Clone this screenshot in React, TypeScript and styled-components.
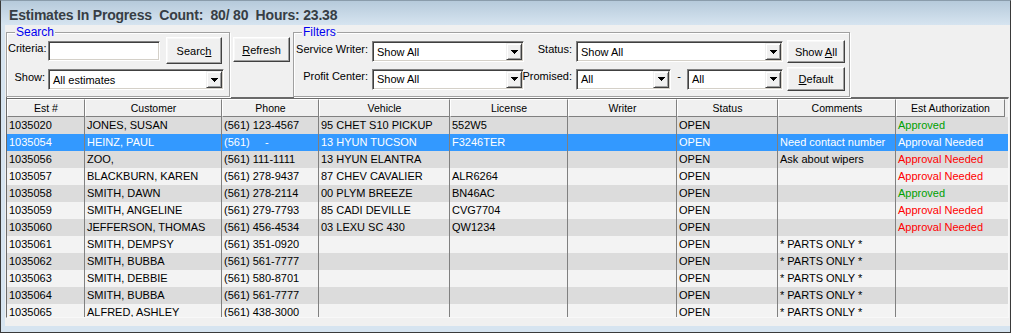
import React from "react";
import styled, { createGlobalStyle } from "styled-components";

const GlobalStyle = createGlobalStyle`
  html, body {
    margin: 0;
    padding: 0;
    background: #ffffff;
  }
  body {
    font-family: "Liberation Sans", Arial, sans-serif;
    font-size: 11px;
  }
  * {
    box-sizing: border-box;
  }
`;

const Window = styled.div`
  width: 1011px;
  height: 333px;
  display: flex;
  flex-direction: column;
  border: 1px solid #3a3a3a;
  border-top-color: #8a9cab;
  background: linear-gradient(#b6cadb 0px, #d6e4f0 24px, #d6e4f0 100%);
  overflow: hidden;
`;

const TitleBar = styled.div`
  height: 24px;
  flex: none;
  padding: 4px 0 0 8px;
  font-size: 14px;
  font-weight: bold;
  line-height: 20px;
  letter-spacing: -0.2px;
  color: #373e45;
  white-space: pre;
`;

const Panel = styled.div`
  height: 301px;
  flex: none;
  margin: 0 0 6px 4px;
  background: #f0f0f0;
  display: flex;
  flex-direction: column;
`;

const Controls = styled.div`
  height: 72px;
  flex: none;
  display: flex;
  align-items: flex-start;
  padding-left: 1px;
`;

const Group = styled.div<{ $width: number }>`
  position: relative;
  width: ${(p) => p.$width}px;
  height: 65px;
  margin-top: 7px;
  border: 1px solid #a0a0a0;
  box-shadow: inset 1px 1px 0 #ffffff, 1px 1px 0 #ffffff;
`;

const Legend = styled.span`
  position: absolute;
  top: -8px;
  left: 8px;
  padding: 0 1px;
  background: #f0f0f0;
  color: #0000f0;
  font-size: 12px;
  line-height: 14px;
`;

const SearchBody = styled.div`
  display: flex;
  flex-direction: column;
  gap: 5px;
  padding: 4px 0 0 1px;
`;

const Row = styled.div`
  display: flex;
  align-items: center;
`;

const Label = styled.span<{ $width?: number }>`
  width: ${(p) => (p.$width ? `${p.$width}px` : "auto")};
  flex: none;
  margin: 0 3px 5px 0;
  text-align: right;
  line-height: 13px;
  white-space: nowrap;
  color: #000;
`;

const FiltersBody = styled.div`
  display: grid;
  grid-template-columns: 70px 152px 44px 207px 58px;
  grid-template-rows: 23px 24px;
  column-gap: 4px;
  row-gap: 4px;
  padding: 7px 4px 0 4px;
  align-items: center;

  ${Label} {
    margin-right: 0;
    justify-self: end;
  }
`;

const Field = styled.div<{ $width?: number; $height?: number }>`
  width: ${(p) => (p.$width ? `${p.$width}px` : "100%")};
  height: ${(p) => p.$height ?? 21}px;
  flex: none;
  display: flex;
  align-items: stretch;
  padding: 1px;
  background: #ffffff;
  border: 1px solid;
  border-color: #808080 #ffffff #ffffff #808080;
  box-shadow: inset 1px 1px 0 #404040, inset -1px -1px 0 #d4d0c8;
`;

const FieldValue = styled.span`
  flex: 1;
  padding-left: 3px;
  display: flex;
  align-items: center;
  white-space: nowrap;
  overflow: hidden;
  color: #000;
`;

const ArrowButton = styled.span`
  width: 16px;
  flex: none;
  display: flex;
  align-items: center;
  justify-content: center;
  background: #f0f0f0;
  border: 1px solid;
  border-color: #f0f0f0 #404040 #404040 #f0f0f0;
  box-shadow: inset 1px 1px 0 #ffffff, inset -1px -1px 0 #a0a0a0;
`;

const Button = styled.div<{ $width: number; $height?: number }>`
  width: ${(p) => p.$width}px;
  height: ${(p) => (p.$height ? `${p.$height}px` : "100%")};
  flex: none;
  display: flex;
  align-items: center;
  justify-content: center;
  background: #f0f0f0;
  border: 1px solid;
  border-color: #ffffff #404040 #404040 #ffffff;
  box-shadow: inset -1px -1px 0 #a0a0a0, inset 1px 1px 0 #f8f8f8;
  color: #000;
  font-size: 11px;
  cursor: default;
  user-select: none;
  white-space: pre;

  u {
    text-underline-offset: 1px;
  }
`;

const RefreshButton = styled(Button)`
  margin: 12px 3px 0 3px;
`;

const SearchButton = styled(Button)`
  margin-left: 6px;
`;

const RangeCell = styled.div`
  display: flex;
  align-items: center;
`;

const Dash = styled.span`
  flex: 1;
  text-align: center;
  margin-bottom: 5px;
  line-height: 13px;
`;

const GridBox = styled.div`
  width: 1003px;
  height: 221px;
  flex: none;
  margin-left: 1px;
  border-style: solid;
  border-width: 2px 1px 1px 1px;
  border-color: #6a6a6a #f8f8f8 #f8f8f8 #6a6a6a;
  background: #f0f0f0;
  overflow: hidden;
`;

const HeaderRow = styled.div`
  display: flex;
  height: 18px;
`;

const HeadCell = styled.div<{ $width: number }>`
  width: ${(p) => p.$width}px;
  flex: none;
  background: #f0f0f0;
  border: 1px solid;
  border-color: #ffffff #808080 #808080 #ffffff;
  text-align: center;
  line-height: 16px;
  font-size: 10.5px;
  color: #000;
  white-space: nowrap;
  overflow: hidden;
`;

const HeadFiller = styled.div`
  flex: 1;
  background: #f0f0f0;
`;

const GridBody = styled.div`
  height: 200px;
  overflow: hidden;
`;

type Tone = "dark" | "light" | "selected";

const rowBg: Record<Tone, string> = {
  dark: "#dcdcdc",
  light: "#f3f3f3",
  selected: "#3399ff",
};

const DataRow = styled.div<{ $tone: Tone }>`
  display: flex;
  height: 17px;
  background: ${(p) => rowBg[p.$tone]};
  color: ${(p) => (p.$tone === "selected" ? "#ffffff" : "#000000")};
`;

const Cell = styled.div<{ $width?: number; $color?: string }>`
  width: ${(p) => (p.$width ? `${p.$width}px` : "auto")};
  flex: ${(p) => (p.$width ? "none" : "1")};
  border-right: ${(p) => (p.$width ? "1px solid #808080" : "none")};
  padding-left: 2px;
  line-height: 17px;
  font-size: 11px;
  white-space: pre;
  overflow: hidden;
  color: ${(p) => p.$color ?? "inherit"};
`;

function DownArrow() {
  return (
    <svg width="7" height="4" viewBox="0 0 7 4" shapeRendering="crispEdges">
      <polygon points="0,0 7,0 3.5,4" fill="#000" />
    </svg>
  );
}

function Select({ value, width }: { value: string; width?: number }) {
  return (
    <Field $width={width}>
      <FieldValue>{value}</FieldValue>
      <ArrowButton>
        <DownArrow />
      </ArrowButton>
    </Field>
  );
}

const columns = [
  { title: "Est #", width: 78 },
  { title: "Customer", width: 137 },
  { title: "Phone", width: 97 },
  { title: "Vehicle", width: 131 },
  { title: "License", width: 118 },
  { title: "Writer", width: 109 },
  { title: "Status", width: 101 },
  { title: "Comments", width: 118 },
];

type Auth = "" | "Approved" | "Approval Needed";

interface Estimate {
  est: string;
  customer: string;
  phone: string;
  vehicle: string;
  license: string;
  writer: string;
  status: string;
  comments: string;
  auth: Auth;
}

const estimates: Estimate[] = [
  { est: "1035020", customer: "JONES, SUSAN", phone: "(561) 123-4567", vehicle: "95 CHET S10 PICKUP", license: "552W5", writer: "", status: "OPEN", comments: "", auth: "Approved" },
  { est: "1035054", customer: "HEINZ, PAUL", phone: "(561)     -", vehicle: "13 HYUN TUCSON", license: "F3246TER", writer: "", status: "OPEN", comments: "Need contact number", auth: "Approval Needed" },
  { est: "1035056", customer: "ZOO,", phone: "(561) 111-1111", vehicle: "13 HYUN ELANTRA", license: "", writer: "", status: "OPEN", comments: "Ask about wipers", auth: "Approval Needed" },
  { est: "1035057", customer: "BLACKBURN, KAREN", phone: "(561) 278-9437", vehicle: "87 CHEV CAVALIER", license: "ALR6264", writer: "", status: "OPEN", comments: "", auth: "Approval Needed" },
  { est: "1035058", customer: "SMITH, DAWN", phone: "(561) 278-2114", vehicle: "00 PLYM BREEZE", license: "BN46AC", writer: "", status: "OPEN", comments: "", auth: "Approved" },
  { est: "1035059", customer: "SMITH, ANGELINE", phone: "(561) 279-7793", vehicle: "85 CADI DEVILLE", license: "CVG7704", writer: "", status: "OPEN", comments: "", auth: "Approval Needed" },
  { est: "1035060", customer: "JEFFERSON, THOMAS", phone: "(561) 456-4534", vehicle: "03 LEXU SC 430", license: "QW1234", writer: "", status: "OPEN", comments: "", auth: "Approval Needed" },
  { est: "1035061", customer: "SMITH, DEMPSY", phone: "(561) 351-0920", vehicle: "", license: "", writer: "", status: "OPEN", comments: "* PARTS ONLY *", auth: "" },
  { est: "1035062", customer: "SMITH, BUBBA", phone: "(561) 561-7777", vehicle: "", license: "", writer: "", status: "OPEN", comments: "* PARTS ONLY *", auth: "" },
  { est: "1035063", customer: "SMITH, DEBBIE", phone: "(561) 580-8701", vehicle: "", license: "", writer: "", status: "OPEN", comments: "* PARTS ONLY *", auth: "" },
  { est: "1035064", customer: "SMITH, BUBBA", phone: "(561) 561-7777", vehicle: "", license: "", writer: "", status: "OPEN", comments: "* PARTS ONLY *", auth: "" },
  { est: "1035065", customer: "ALFRED, ASHLEY", phone: "(561) 438-3000", vehicle: "", license: "", writer: "", status: "OPEN", comments: "* PARTS ONLY *", auth: "" },
];

const SELECTED = 1;

function authColor(auth: Auth, selected: boolean) {
  if (selected) return "#ffffff";
  if (auth === "Approved") return "#00a000";
  return "#ff0000";
}

export default function App() {
  return (
    <>
      <GlobalStyle />
      <Window>
        <TitleBar>{"Estimates In Progress  Count:  80/ 80  Hours: 23.38"}</TitleBar>
        <Panel>
          <Controls>
            <Group $width={224}>
              <Legend>Search</Legend>
              <SearchBody>
                <Row>
                  <Label $width={37}>Criteria:</Label>
                  <Field $width={112} $height={20} />
                  <SearchButton $width={56} $height={27}>
                    <span>
                      Searc<u>h</u>
                    </span>
                  </SearchButton>
                </Row>
                <Row>
                  <Label $width={37}>Show:</Label>
                  <Select value="All estimates" width={176} />
                </Row>
              </SearchBody>
            </Group>

            <RefreshButton $width={57} $height={25}>
              <span>
                <u>R</u>efresh
              </span>
            </RefreshButton>

            <Group $width={557}>
              <Legend>Filters</Legend>
              <FiltersBody>
                <Label>Service Writer:</Label>
                <Select value="Show All" />
                <Label>Status:</Label>
                <Select value="Show All" />
                <Button $width={58}>
                  <span>
                    {"Show "}
                    <u>A</u>
                    {"ll"}
                  </span>
                </Button>

                <Label>Profit Center:</Label>
                <Select value="Show All" />
                <Label>Promised:</Label>
                <RangeCell>
                  <Select value="All" width={95} />
                  <Dash>-</Dash>
                  <Select value="All" width={96} />
                </RangeCell>
                <Button $width={58}>
                  <span>
                    <u>D</u>efault
                  </span>
                </Button>
              </FiltersBody>
            </Group>
          </Controls>

          <GridBox>
            <HeaderRow>
              {columns.map((c) => (
                <HeadCell key={c.title} $width={c.width}>
                  {c.title}
                </HeadCell>
              ))}
              <HeadCell $width={109}>Est Authorization</HeadCell>
              <HeadFiller />
            </HeaderRow>
            <GridBody>
              {estimates.map((e, i) => {
                const selected = i === SELECTED;
                const tone: Tone = selected ? "selected" : i % 2 === 0 ? "dark" : "light";
                const values = [e.est, e.customer, e.phone, e.vehicle, e.license, e.writer, e.status, e.comments];
                return (
                  <DataRow key={e.est} $tone={tone}>
                    {values.map((v, j) => (
                      <Cell key={j} $width={columns[j].width}>
                        {v}
                      </Cell>
                    ))}
                    <Cell $color={authColor(e.auth, selected)}>{e.auth}</Cell>
                  </DataRow>
                );
              })}
            </GridBody>
          </GridBox>
        </Panel>
      </Window>
    </>
  );
}
